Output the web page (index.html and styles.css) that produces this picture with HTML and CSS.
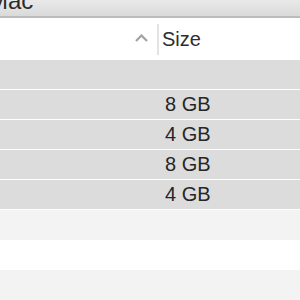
FILE: index.html
```html
<!DOCTYPE html>
<html lang="en">
<head>
    <meta charset="UTF-8">
    <meta name="viewport" content="width=device-width, initial-scale=1.0">
    <title>Mac - Finder</title>
    <link rel="stylesheet" href="styles.css">
</head>
<body>
    <div class="window">
        <div class="title-bar">
            <span class="title">Mac</span>
        </div>
        <div class="list-header">
            <div class="col-name">
                <svg class="sort-icon" width="13" height="8" viewBox="0 0 13 8">
                    <polyline points="1,7 6.5,1.5 12,7" fill="none" stroke="#a2a2a2" stroke-width="2.2"/>
                </svg>
            </div>
            <div class="col-divider"></div>
            <div class="col-size">Size</div>
        </div>
        <div class="file-list">
            <div class="row selected"><div class="col-name"></div><div class="col-size"></div></div>
            <div class="row selected"><div class="col-name"></div><div class="col-size">8 GB</div></div>
            <div class="row selected"><div class="col-name"></div><div class="col-size">4 GB</div></div>
            <div class="row selected"><div class="col-name"></div><div class="col-size">8 GB</div></div>
            <div class="row selected"><div class="col-name"></div><div class="col-size">4 GB</div></div>
            <div class="row stripe"></div>
            <div class="row"></div>
            <div class="row stripe"></div>
        </div>
    </div>
</body>
</html>
```

FILE: styles.css
```css
/* --- General Setup --- */
:root {
    --text-color: #262626;
    --title-bg-top: #e9e9e9;
    --title-bg-bottom: #dadada;
    --title-border: #bcbcbc;
    --selected-bg: #dcdcdc;
    --stripe-bg: #f3f3f3;
    --divider-color: #e3e3e3;
}
body {
    margin: 0;
    background-color: #ffffff;
    color: var(--text-color);
    font-family: "Liberation Sans", Arial, sans-serif;
    font-size: 20px;
}

.window {
    width: 300px;
    height: 300px;
    overflow: hidden;
}

/* --- Title Bar --- */
.title-bar {
    height: 16px;
    background: linear-gradient(to bottom, var(--title-bg-top), var(--title-bg-bottom));
    border-bottom: 2px solid var(--title-border);
    overflow: hidden;
}
.title {
    display: block;
    font-size: 24px;
    line-height: 24px;
    margin-top: -11px;
    margin-left: -12px;
    color: #2b2b2b;
}

/* --- Column Header --- */
.list-header {
    display: flex;
    align-items: center;
    height: 42px;
    background-color: #ffffff;
}
.list-header .col-name {
    width: 157px;
    display: flex;
    justify-content: flex-end;
    padding-right: 9px;
    box-sizing: border-box;
}
.sort-icon { display: block; margin-top: -2px; }
.col-divider {
    width: 2px;
    height: 31px;
    background-color: var(--divider-color);
}
.list-header .col-size {
    padding-left: 3px;
    color: #2e2e2e;
    line-height: 42px;
}

/* --- Rows --- */
.row {
    display: flex;
    height: 30px;
    line-height: 29px;
}
.row .col-name { width: 159px; }
.row .col-size { padding-left: 6px; }
.row.selected {
    height: 29px;
    background-color: var(--selected-bg);
    border-bottom: 1px solid #ffffff;
}
.row.stripe { background-color: var(--stripe-bg); }
```
